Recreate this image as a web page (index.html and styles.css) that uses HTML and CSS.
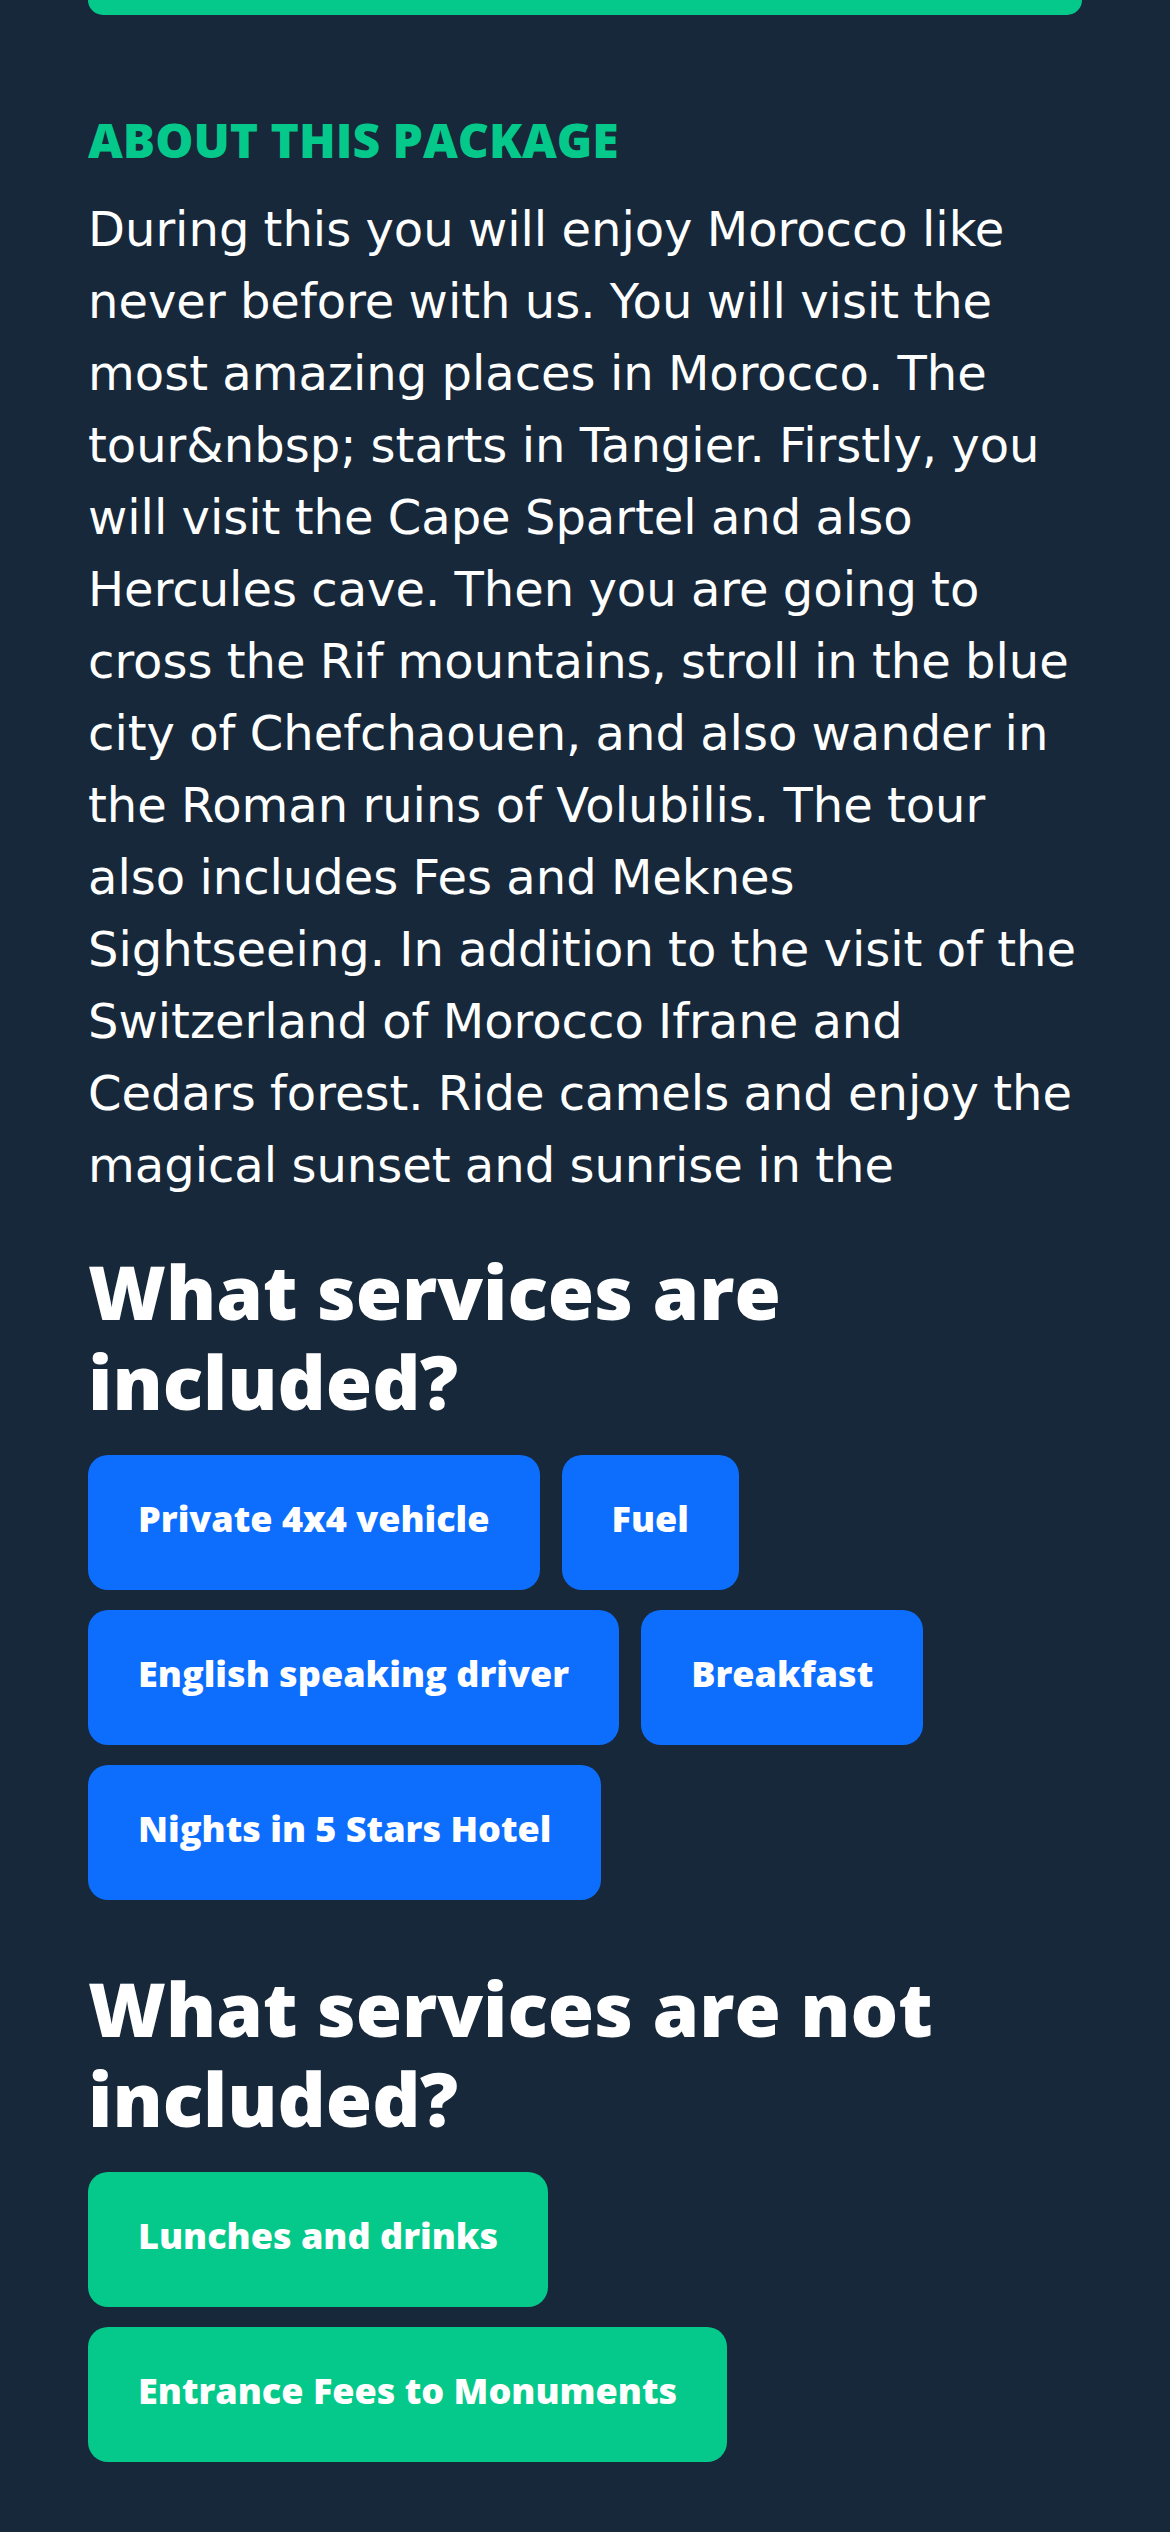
FILE: index.html
```html
<!DOCTYPE html>
<html lang="en">
<head>
<meta charset="utf-8">
<title>About this package</title>
<link rel="stylesheet" href="styles.css">
</head>
<body>
<main class="page">
  <div class="book-bar"></div>

  <section class="about">
    <h2 class="eyebrow">ABOUT THIS PACKAGE</h2>
    <p class="about-text">During this you will enjoy Morocco like never before with us. You will visit the most amazing places in Morocco. The tour&amp;nbsp; starts in Tangier. Firstly, you will visit the Cape Spartel and also Hercules cave. Then you are going to cross the Rif mountains, stroll in the blue city of Chefchaouen, and also wander in the Roman ruins of Volubilis. The tour also includes Fes and Meknes Sightseeing. In addition to the visit of the Switzerland of Morocco Ifrane and Cedars forest. Ride camels and enjoy the magical sunset and sunrise in the</p>
  </section>

  <section class="services">
    <h3 class="services-title">What services are included?</h3>
    <ul class="tags">
      <li class="tag tag-blue">Private 4x4 vehicle</li>
      <li class="tag tag-blue">Fuel</li>
      <li class="tag tag-blue">English speaking driver</li>
      <li class="tag tag-blue">Breakfast</li>
      <li class="tag tag-blue">Nights in 5 Stars Hotel</li>
    </ul>
  </section>

  <section class="services services-not">
    <h3 class="services-title">What services are not included?</h3>
    <ul class="tags">
      <li class="tag tag-green">Lunches and drinks</li>
      <li class="tag tag-green">Entrance Fees to Monuments</li>
    </ul>
  </section>
</main>
</body>
</html>
```
FILE: styles.css
```css
* { box-sizing: border-box; }

html, body {
  margin: 0;
  padding: 0;
  background: #16283a;
}

body {
  min-height: 2532px;
  color: #ffffff;
  font-family: "DejaVu Sans", "Open Sans", sans-serif;
}

.page {
  padding: 0 88px 60px;
}

.book-bar {
  height: 15px;
  background: #05c98a;
  border-radius: 0 0 18px 18px;
}

.about {
  padding-top: 89px;
}

.eyebrow {
  margin: 0 0 17px;
  font-family: "Open Sans", sans-serif;
  font-weight: 800;
  font-size: 48px;
  line-height: 72px;
  color: #05c98a;
}

.about-text {
  margin: 0;
  font-size: 48px;
  line-height: 72px;
  font-weight: 400;
  word-spacing: -1px;
  color: #ffffff;
}

.services {
  padding-top: 45px;
}

.services-not {
  padding-top: 63px;
}

.services-title {
  margin: 0 0 29px;
  font-family: "Open Sans", sans-serif;
  font-weight: 800;
  font-size: 75px;
  line-height: 90px;
  color: #ffffff;
}

.tags {
  list-style: none;
  margin: 0;
  padding: 0;
  display: flex;
  flex-wrap: wrap;
  align-items: flex-start;
  gap: 20px 22px;
}

.services-not .tags {
  flex-direction: column;
}

.tag {
  height: 135px;
  padding: 37px 50px 44px;
  border-radius: 20px;
  font-family: "Open Sans", sans-serif;
  font-weight: 800;
  font-size: 36px;
  line-height: 54px;
  color: #ffffff;
  white-space: nowrap;
}

.tag-blue { background: #0d6efd; }
.tag-green { background: #05c98a; }
```
